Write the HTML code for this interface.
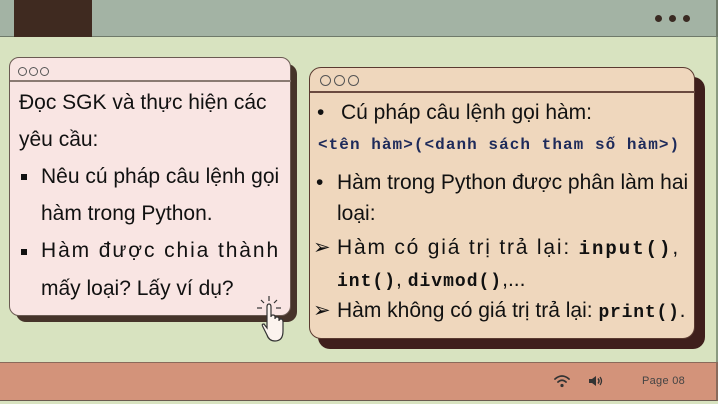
<!DOCTYPE html>
<html><head><meta charset="utf-8"><style>
*{margin:0;padding:0;box-sizing:border-box}
body{width:718px;height:404px;overflow:hidden;background:#d8e3c0;position:relative;font-family:"Liberation Sans",Arial,sans-serif;color:#111}
.abs{position:absolute}
.t{position:absolute;white-space:nowrap;font-size:21px;line-height:26px}
.r{font-size:21px;line-height:24px}
.m{font-family:"Liberation Mono",monospace;font-weight:bold}
.c{display:inline-block;width:9px;height:9px;border:1.3px solid #555;border-radius:50%;margin-right:2px}
</style></head><body>
<div class="abs" style="left:0;top:0;width:718px;height:37px;background:#a3b3a4;border-bottom:1px solid #6f7a6a;border-right:2px solid #6f7a6a"></div>
<div class="abs" style="left:14px;top:0;width:78px;height:37px;background:#3f2a20"></div>
<div class="abs" style="left:655px;top:15px;width:7px;height:7px;border-radius:50%;background:#3a2a22"></div>
<div class="abs" style="left:669px;top:15px;width:7px;height:7px;border-radius:50%;background:#3a2a22"></div>
<div class="abs" style="left:683px;top:15px;width:7px;height:7px;border-radius:50%;background:#3a2a22"></div>
<div class="abs" style="left:716px;top:37px;width:2px;height:326px;background:#8a9a80"></div>

<!-- left card -->
<div class="abs" style="left:16px;top:64px;width:281px;height:258px;background:#46342a;border-radius:10px"></div>
<div class="abs" style="left:9px;top:57px;width:282px;height:259px;background:#f9e5e3;border:1px solid #6a5a52;border-radius:10px"></div>
<div class="abs" style="left:10px;top:80px;width:281px;height:2px;background:#8a7a72"></div>
<div class="abs" style="left:18px;top:63px"><span class="c"></span><span class="c"></span><span class="c"></span></div>
<div class="t" style="left:19px;top:90px">Đọc SGK và thực hiện các</div>
<div class="t" style="left:19px;top:127px">yêu cầu:</div>
<div class="abs" style="left:21px;top:174px;width:6px;height:6px;background:#111"></div>
<div class="t" style="left:41px;top:164px">Nêu cú pháp câu lệnh gọi</div>
<div class="t" style="left:41px;top:201px">hàm trong Python.</div>
<div class="abs" style="left:21px;top:249px;width:6px;height:6px;background:#111"></div>
<div class="t" style="left:41px;top:238px;letter-spacing:1.9px">Hàm được chia thành</div>
<div class="t" style="left:41px;top:276px">mấy loại? Lấy ví dụ?</div>
<svg class="abs" style="left:255px;top:295px" width="32" height="50" viewBox="0 0 32 50">
<g stroke="#333" stroke-width="1.2" fill="none">
<line x1="14" y1="1" x2="14" y2="6"/><line x1="6" y1="5" x2="9" y2="8"/><line x1="22" y1="5" x2="19" y2="8"/><line x1="2" y1="13" x2="7" y2="13"/><line x1="21" y1="13" x2="26" y2="13"/>
<path d="M12 40 L8 32 Q6 29 9 29 L12 33 L12 12 Q12 9 14 9 Q16 9 16 12 L16 22 Q16 20 18 20 Q20 20 20 22 L20 24 Q20 22 22 22 Q24 22 24 24 L24 26 Q24 24 26 24 Q28 24 28 27 L28 36 Q28 46 20 46 Q14 46 12 40 Z" fill="#fbf3ee"/>
</g></svg>

<!-- right card -->
<div class="abs" style="left:318px;top:77px;width:387px;height:272px;background:#3f1f1c;border-radius:12px"></div>
<div class="abs" style="left:309px;top:67px;width:386px;height:272px;background:#efd7bd;border:1px solid #5a3a30;border-radius:12px"></div>
<div class="abs" style="left:310px;top:91px;width:385px;height:1.5px;background:#6a4a40"></div>
<div class="abs" style="left:320px;top:73px"><span class="c" style="width:11px;height:11px;margin-right:3px"></span><span class="c" style="width:11px;height:11px;margin-right:3px"></span><span class="c" style="width:11px;height:11px"></span></div>
<div class="t r" style="left:317px;top:101px">•</div>
<div class="t r" style="left:341px;top:101px">Cú pháp câu lệnh gọi hàm:</div>
<div class="t m" style="left:318px;top:135px;font-size:16px;line-height:20px;color:#1d2a5a;letter-spacing:1.05px">&lt;tên hàm&gt;(&lt;danh sách tham số hàm&gt;)</div>
<div class="t r" style="left:316px;top:171px">•</div>
<div class="t r" style="left:337px;top:171px">Hàm trong Python được phân làm hai</div>
<div class="t r" style="left:337px;top:202px">loại:</div>
<div class="t r" style="left:313px;top:236px">➢</div>
<div class="t r" style="left:337px;top:236px;letter-spacing:1.8px">Hàm có giá trị trả lại: <span class="m" style="font-size:19px;letter-spacing:2px">input()</span>,</div>
<div class="t r" style="left:337px;top:268px"><span class="m" style="font-size:18px;letter-spacing:1px">int()</span>, <span class="m" style="font-size:18px;letter-spacing:1px">divmod()</span>,...</div>
<div class="t r" style="left:313px;top:299px">➢</div>
<div class="t r" style="left:337px;top:299px">Hàm không có giá trị trả lại: <span class="m" style="font-size:18px;letter-spacing:0.8px">print()</span>.</div>

<!-- bottom bar -->
<div class="abs" style="left:0;top:362px;width:718px;height:39px;background:#d3937a;border-top:1px solid #8a6a5a;border-bottom:1px solid #6a5a50;border-right:2px solid #8a6a5a"></div>
<svg class="abs" style="left:553px;top:374px" width="18" height="14" viewBox="0 0 18 14"><g fill="none" stroke="#333" stroke-width="1.8" stroke-linecap="round"><path d="M2 5 Q9 -1 16 5"/><path d="M5 8 Q9 4.5 13 8"/></g><circle cx="9" cy="11.5" r="1.6" fill="#333"/></svg>
<svg class="abs" style="left:587px;top:374px" width="18" height="14" viewBox="0 0 18 14"><path d="M2 5 L5 5 L9 2 L9 12 L5 9 L2 9 Z" fill="#333"/><path d="M11 4.5 Q13 7 11 9.5" fill="none" stroke="#333" stroke-width="1.5"/><path d="M13 3 Q16 7 13 11" fill="none" stroke="#333" stroke-width="1.3"/></svg>
<div class="t" style="left:642px;top:375px;font-size:11px;line-height:13px;color:#444;letter-spacing:0.3px">Page 08</div>
</body></html>
